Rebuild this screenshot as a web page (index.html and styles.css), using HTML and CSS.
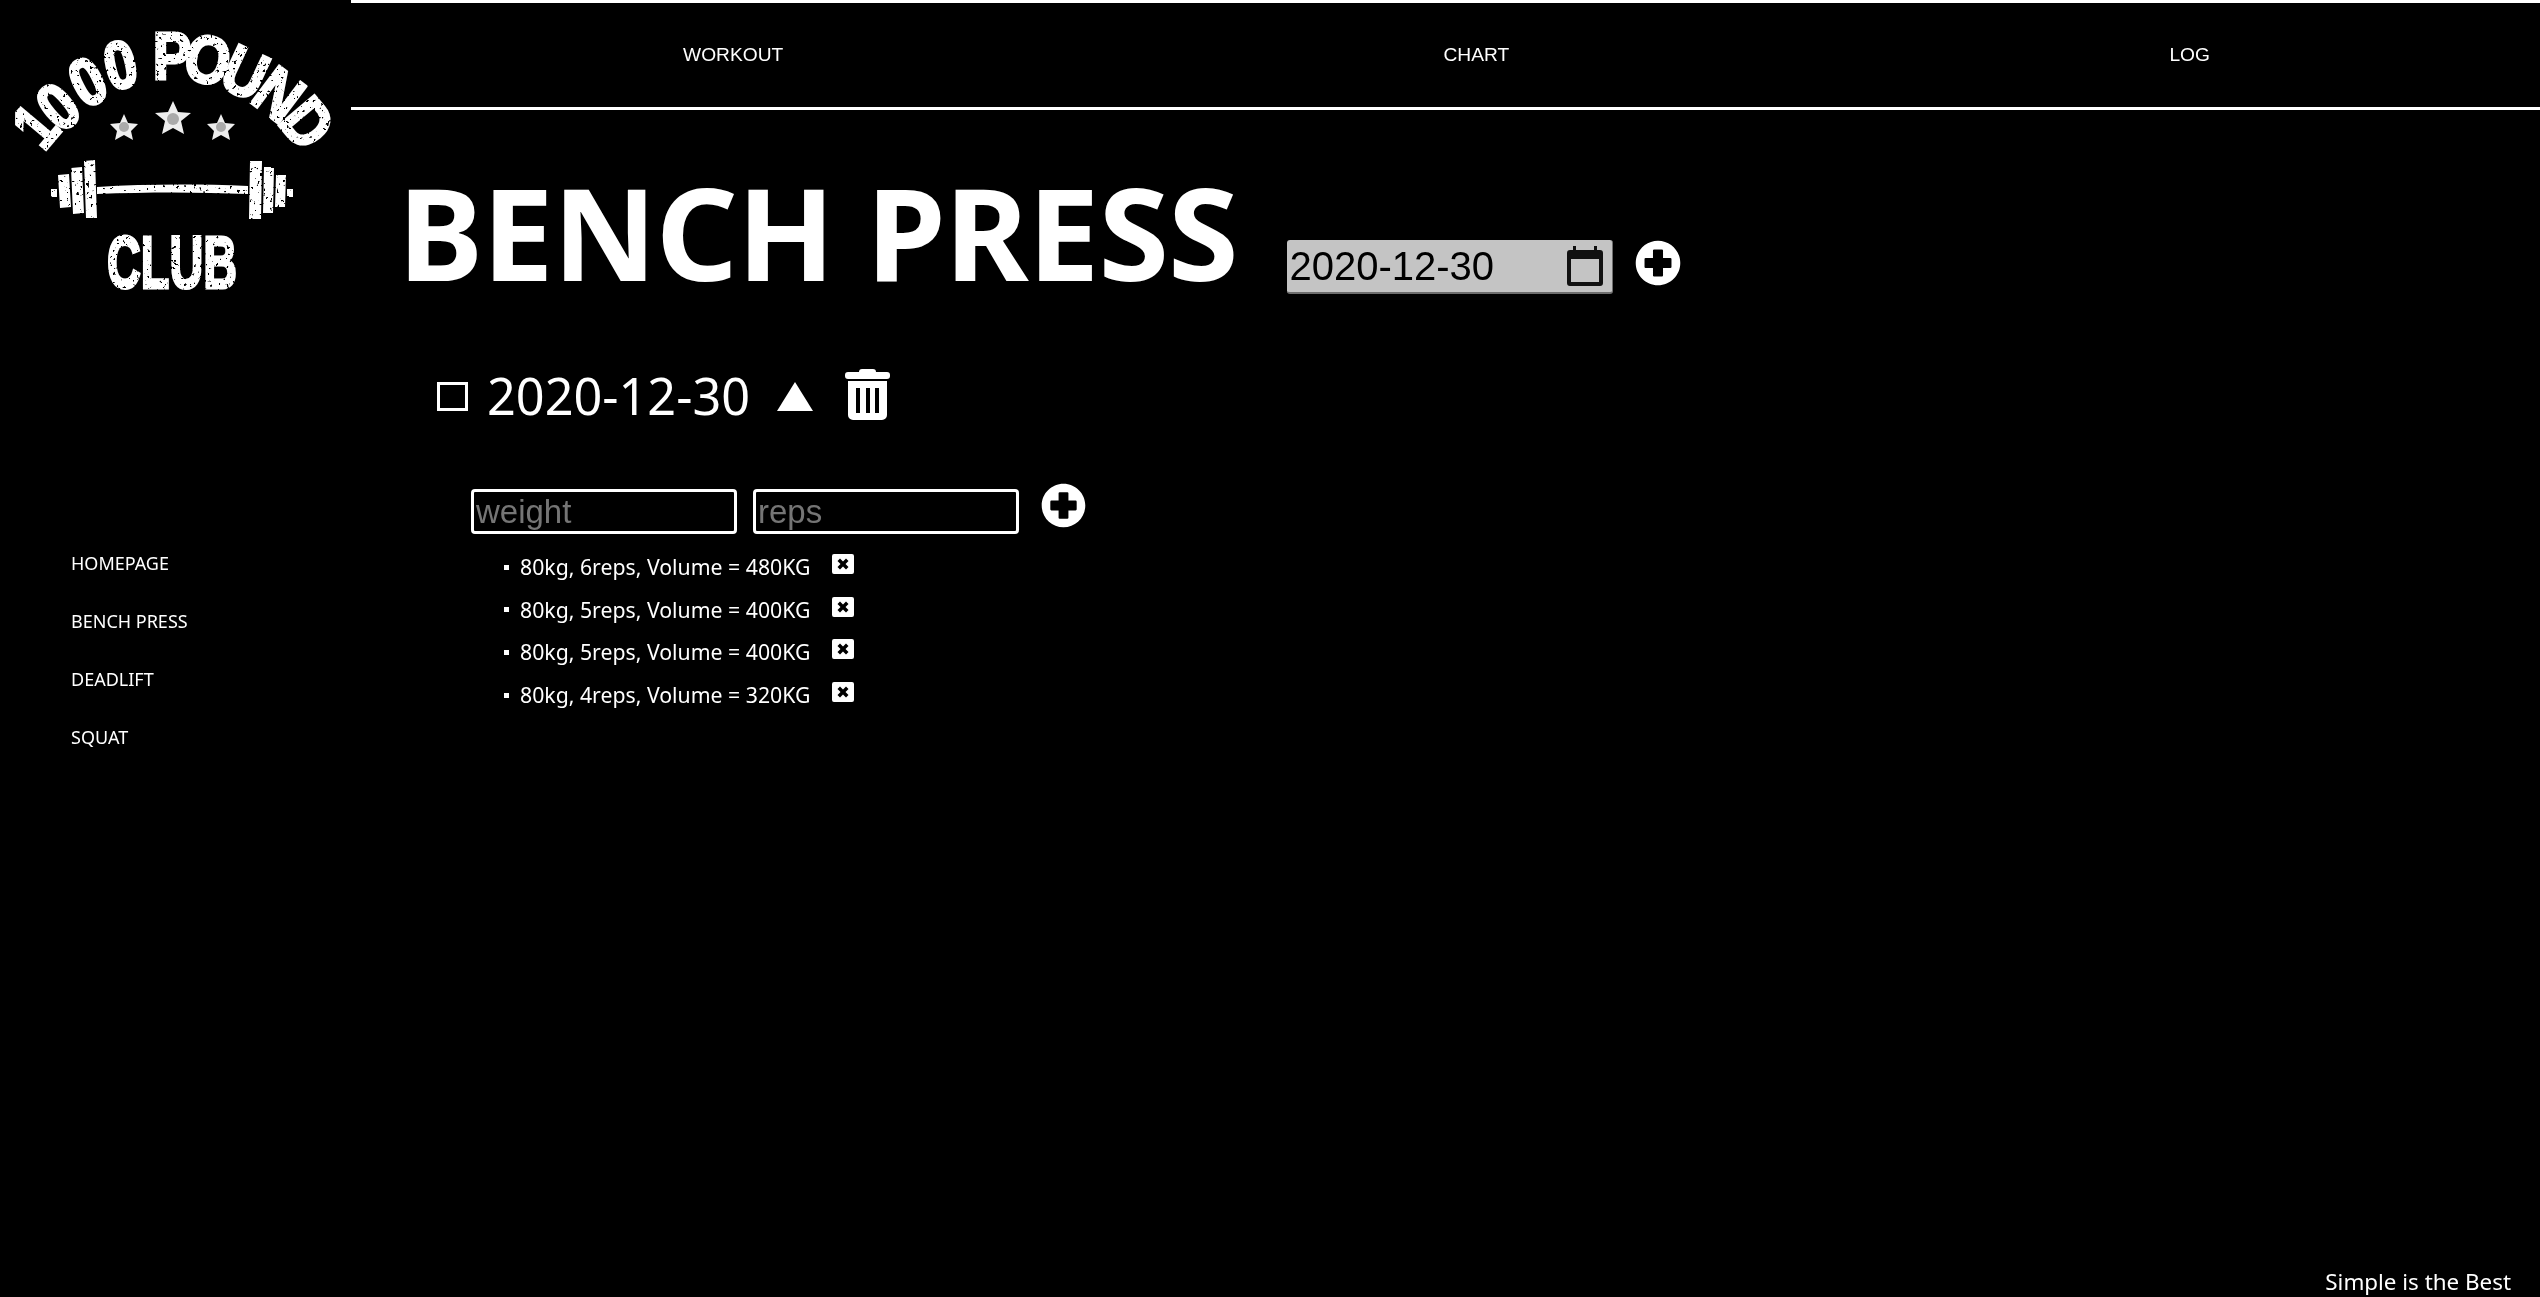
FILE: index.html
```html
<!DOCTYPE html>
<html lang="en">
<head>
  <meta charset="UTF-8">
  <meta name="viewport" content="width=device-width, initial-scale=1.0">
  <title>Bench Press</title>
  <link rel="stylesheet" href="styles.css">
</head>
<body>
  <aside class="sidebar">
    <svg class="logo" viewBox="0 0 351 320" role="img" aria-label="1000 Pound Club">
      <defs>
        <filter id="worn" x="0" y="0" width="100%" height="100%" color-interpolation-filters="sRGB">
          <feTurbulence type="fractalNoise" baseFrequency="0.3" numOctaves="2" seed="7" result="noise"/>
          <feColorMatrix in="noise" type="matrix" values="0 0 0 0 0  0 0 0 0 0  0 0 0 0 0  -16 0 0 0 11.4" result="holes"/>
          <feComposite in="SourceGraphic" in2="holes" operator="in"/>
        </filter>
      </defs>
      <g class="logo-art" filter="url(#worn)">
        <text transform="translate(34,125) rotate(-50) scale(.78,1)" y="25">1</text>
        <text transform="translate(57,105) rotate(-40) scale(.86,1)" y="25">0</text>
        <text transform="translate(87,80) rotate(-27) scale(.86,1)" y="25">0</text>
        <text transform="translate(120,63) rotate(-13) scale(.86,1)" y="25">0</text>
        <text transform="translate(172,54) rotate(0) scale(.86,1)" y="25">P</text>
        <text transform="translate(208,58) rotate(12) scale(.86,1)" y="25">O</text>
        <text transform="translate(246,71) rotate(25) scale(.86,1)" y="25">U</text>
        <text transform="translate(280,93) rotate(37) scale(.86,1)" y="25">N</text>
        <text transform="translate(309,122) rotate(50) scale(.86,1)" y="25">D</text>
        <path d="M51 189h6v8h-6zM58 175l11-1 2 33-11 1zM71 168l11-1 2 46-11 1zM84 161l11-1 2 58-11 0zM97 187c50-3 100-3 151-1l0 8c-50-2-100-2-151 0zM250 161h12l-1 58h-12zM264 167h10l-1 46h-10zM276 175h10l-1 32h-10zM287 189h6v8h-6z"/>
        <text class="logo-club" x="107" y="288" textLength="130" lengthAdjust="spacingAndGlyphs">CLUB</text>
      </g>
      <g class="logo-stars">
        <polygon points="124,114 128,123 138,124 131,131 133,140 124,135 115,140 117,131 110,124 120,123"/>
        <polygon points="173,101 178,112 191,113 181,121 184,134 173,128 162,134 165,121 155,113 168,112"/>
        <polygon points="221,114 225,123 235,124 228,131 230,140 221,135 212,140 214,131 207,124 217,123"/>
        <circle class="star-core" cx="124" cy="127" r="5"/>
        <circle class="star-core" cx="173" cy="119" r="6"/>
        <circle class="star-core" cx="221" cy="127" r="5"/>
      </g>
    </svg>
    <nav class="side-nav">
      <a href="#">HOMEPAGE</a>
      <a href="#">BENCH PRESS</a>
      <a href="#">DEADLIFT</a>
      <a href="#">SQUAT</a>
    </nav>
  </aside>

  <div class="page">
    <nav class="top-nav">
      <a href="#">WORKOUT</a>
      <a href="#">CHART</a>
      <a href="#">LOG</a>
    </nav>

    <main class="content">
      <div class="title-row">
        <h1>BENCH PRESS</h1>
        <label class="date-field">
          <input type="text" value="2020-12-30">
          <svg class="calendar" viewBox="0 0 36 40"><path fill-rule="evenodd" d="M6 0h3v4h18V0h3v4h3a3 3 0 0 1 3 3v30a3 3 0 0 1-3 3H3a3 3 0 0 1-3-3V7a3 3 0 0 1 3-3h3zM4 13v23h28V13z"/></svg>
        </label>
        <button class="plus plus-big" type="button">
          <svg viewBox="0 0 512 512"><path fill-rule="evenodd" d="M256 8C119 8 8 119 8 256s111 248 248 248 248-111 248-248S393 8 256 8zM212 106h88a12 12 0 0 1 12 12v82h82a12 12 0 0 1 12 12v88a12 12 0 0 1-12 12h-82v82a12 12 0 0 1-12 12h-88a12 12 0 0 1-12-12v-82h-82a12 12 0 0 1-12-12v-88a12 12 0 0 1 12-12h82v-82a12 12 0 0 1 12-12z"/></svg>
        </button>
      </div>

      <section class="session">
        <div class="session-head">
          <span class="check"></span>
          <span class="session-date">2020-12-30</span>
          <span class="arrow"></span>
          <svg class="trash" viewBox="0 0 45 51"><path fill-rule="evenodd" d="M3 12h39v34a5 5 0 0 1-5 5H8a5 5 0 0 1-5-5zM11 19v25h4V19zM21 19v25h4V19zM30 19v25h4V19zM14 3a3 3 0 0 1 3-3h11a3 3 0 0 1 3 3h11a3 3 0 0 1 3 3v1a3 3 0 0 1-3 3H3a3 3 0 0 1-3-3V6a3 3 0 0 1 3-3z"/></svg>
        </div>

        <form class="set-form">
          <input type="text" placeholder="weight">
          <input type="text" placeholder="reps">
          <button class="plus plus-small" type="button">
            <svg viewBox="0 0 512 512"><path fill-rule="evenodd" d="M256 8C119 8 8 119 8 256s111 248 248 248 248-111 248-248S393 8 256 8zM212 106h88a12 12 0 0 1 12 12v82h82a12 12 0 0 1 12 12v88a12 12 0 0 1-12 12h-82v82a12 12 0 0 1-12 12h-88a12 12 0 0 1-12-12v-82h-82a12 12 0 0 1-12-12v-88a12 12 0 0 1 12-12h82v-82a12 12 0 0 1 12-12z"/></svg>
          </button>
        </form>

        <ul class="sets">
          <li>80kg, 6reps, Volume = 480KG<svg class="remove" viewBox="0 0 22 20"><path fill-rule="evenodd" d="M2 0h18a2 2 0 0 1 2 2v16a2 2 0 0 1-2 2H2a2 2 0 0 1-2-2V2a2 2 0 0 1 2-2zM8 4.500L5.500 7l3 3-3 3L8 15.500l3-3 3 3 2.500-2.500-3-3 3-3L14 4.500l-3 3z"/></svg></li>
          <li>80kg, 5reps, Volume = 400KG<svg class="remove" viewBox="0 0 22 20"><path fill-rule="evenodd" d="M2 0h18a2 2 0 0 1 2 2v16a2 2 0 0 1-2 2H2a2 2 0 0 1-2-2V2a2 2 0 0 1 2-2zM8 4.500L5.500 7l3 3-3 3L8 15.500l3-3 3 3 2.500-2.500-3-3 3-3L14 4.500l-3 3z"/></svg></li>
          <li>80kg, 5reps, Volume = 400KG<svg class="remove" viewBox="0 0 22 20"><path fill-rule="evenodd" d="M2 0h18a2 2 0 0 1 2 2v16a2 2 0 0 1-2 2H2a2 2 0 0 1-2-2V2a2 2 0 0 1 2-2zM8 4.500L5.500 7l3 3-3 3L8 15.500l3-3 3 3 2.500-2.500-3-3 3-3L14 4.500l-3 3z"/></svg></li>
          <li>80kg, 4reps, Volume = 320KG<svg class="remove" viewBox="0 0 22 20"><path fill-rule="evenodd" d="M2 0h18a2 2 0 0 1 2 2v16a2 2 0 0 1-2 2H2a2 2 0 0 1-2-2V2a2 2 0 0 1 2-2zM8 4.500L5.500 7l3 3-3 3L8 15.500l3-3 3 3 2.500-2.500-3-3 3-3L14 4.500l-3 3z"/></svg></li>
        </ul>
      </section>
    </main>

    <footer class="footer">Simple is the Best</footer>
  </div>
</body>
</html>
```

FILE: styles.css
```css
html, body { height: 100%; margin: 0; }
body { display: flex; background: #000; color: #fff; font-family: "Noto Sans", sans-serif; overflow: hidden; }
a { color: #fff; text-decoration: none; }

.sidebar { width: 351px; flex: none; }
.logo { display: block; width: 351px; height: 320px; }
.logo-art { fill: #fff; }
.logo-art text { font-family: "Liberation Sans", sans-serif; font-weight: 700; font-size: 67px; text-anchor: middle; stroke: #fff; stroke-width: 3px; }
.logo-art .logo-club { font-size: 75px; text-anchor: start; }
.logo-stars polygon { fill: #eee; }
.star-core { fill: #aaa; }
.side-nav { display: flex; flex-direction: column; gap: 33px; padding: 231px 0 0 71px; font-size: 18px; line-height: 25px; }

.page { flex: 1; display: flex; flex-direction: column; min-width: 0; }
.top-nav { display: flex; justify-content: space-around; align-items: center; height: 104px; padding-left: 2px; border-top: 3px solid #fff; border-bottom: 3px solid #fff; font-family: "Liberation Sans", sans-serif; font-size: 19.2px; }

.content { flex: 1; padding: 0 0 0 50px; }
.title-row { display: flex; align-items: flex-start; height: 254px; }
h1 { margin: 35px 0 0 -3px; font-size: 128px; line-height: 174px; font-weight: 700; letter-spacing: -1px; }

.date-field { display: flex; align-items: center; width: 326px; height: 54px; margin: 130px 0 0 50px; background: #c4c4c4; border-bottom: 2px solid #6e6e6e; border-right: 1px solid #6e6e6e; border-radius: 3px; box-sizing: border-box; }
.date-field input { flex: 1; min-width: 0; border: 0; padding: 0 0 0 2px; background: none; color: #000; font: 40px "Liberation Sans", sans-serif; outline: none; }
.calendar { width: 36px; height: 40px; margin-right: 9px; flex: none; fill: #111; }

.plus { padding: 0; border: 0; background: none; display: block; }
.plus svg { display: block; width: 100%; height: 100%; fill: #fff; }
.plus-big { width: 46px; height: 46px; margin: 130px 0 0 22px; }
.plus-small { width: 45px; height: 45px; margin: -6px 0 0 6px; }

.session { padding-left: 36px; }
.session-head { display: flex; align-items: center; height: 60px; margin-top: 2px; }
.check { width: 25px; height: 23px; border: 3px solid #fff; }
.session-date { margin-left: 19px; font-size: 50.4px; line-height: 60px; }
.arrow { margin-left: 27px; border-left: 18px solid transparent; border-right: 18px solid transparent; border-bottom: 29px solid #fff; }
.trash { width: 45px; height: 51px; margin: -4px 0 0 32px; fill: #fff; }

.set-form { display: flex; gap: 16px; margin: 63px 0 0 34px; }
.set-form input { width: 266px; height: 45px; box-sizing: border-box; padding: 0 2px; background: #000; border: 3px solid #fff; border-radius: 4px; color: #fff; font: 33px "Liberation Sans", sans-serif; outline: none; }
.set-form input::placeholder { color: #757575; }

.sets { margin: 12px 0 0; padding: 0 0 0 67px; list-style: none; font-size: 21.25px; line-height: 42.6px; }
.sets li { display: flex; align-items: center; }
.sets li::before { content: ""; width: 5px; height: 5px; margin-right: 11px; background: #fff; }
.remove { width: 22px; height: 20px; margin: 0 0 6px 22px; fill: #fff; }

.footer { padding: 0 29px 0 0; text-align: right; font-size: 22.4px; line-height: 30px; }
```
